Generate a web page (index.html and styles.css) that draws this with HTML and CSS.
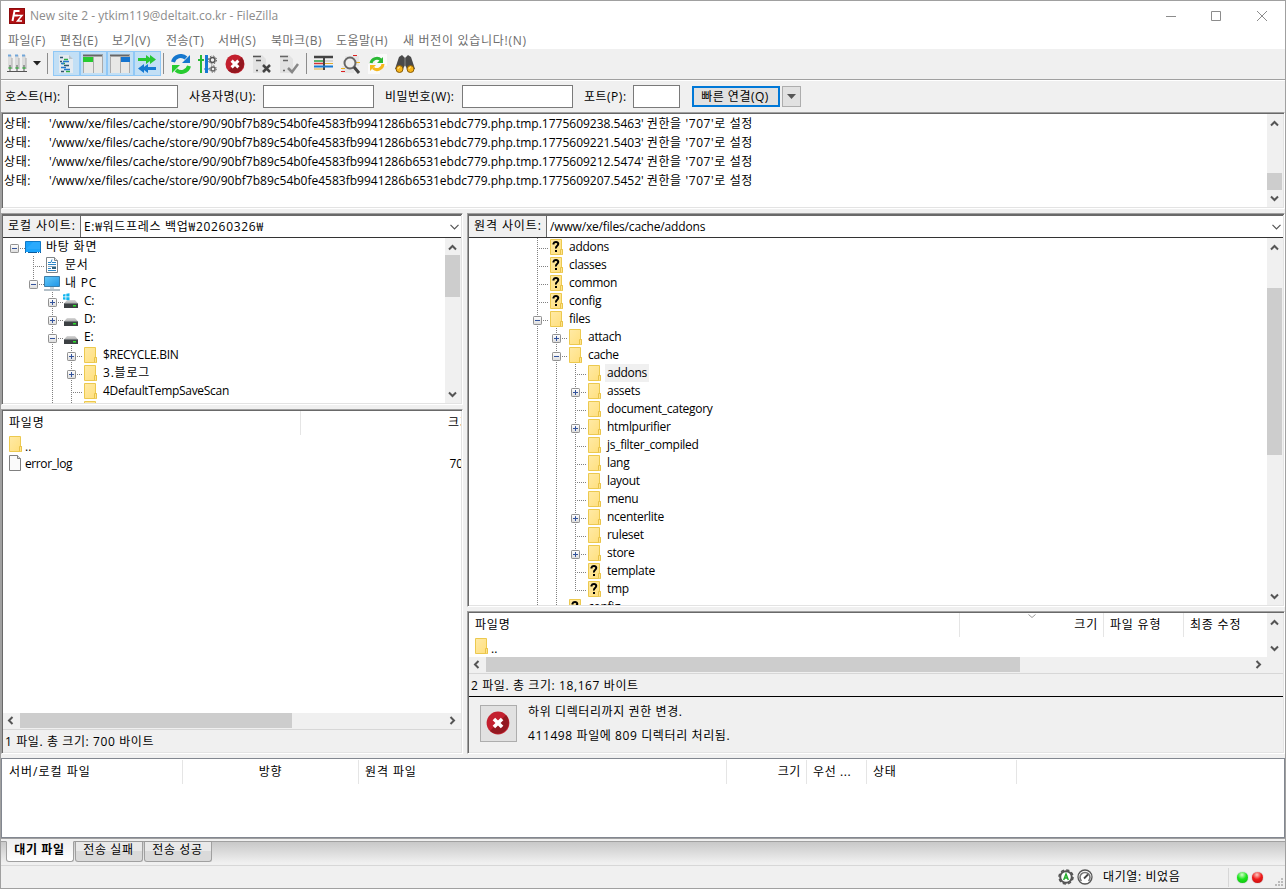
FILE: index.html
```
<!DOCTYPE html>
<html lang="ko">
<head>
<meta charset="utf-8">
<title>New site 2 - FileZilla</title>
<link rel="stylesheet" href="styles.css">
</head>
<body>
<svg class="defs" width="0" height="0">
  <defs>
    <linearGradient id="gf" x1="0" y1="0" x2="1" y2="1"><stop offset="0" stop-color="#ffeaa6"/><stop offset="1" stop-color="#ffdf7c"/></linearGradient>
    <linearGradient id="gb" x1="0" y1="0" x2="1" y2="1"><stop offset="0" stop-color="#65c8f7"/><stop offset="1" stop-color="#1e96e8"/></linearGradient>
    <linearGradient id="gd" x1="0" y1="0" x2="0" y2="1"><stop offset="0" stop-color="#d9d9d9"/><stop offset="1" stop-color="#b0b0b0"/></linearGradient>
    <linearGradient id="gx" x1="0" y1="0" x2="0" y2="1"><stop offset="0" stop-color="#fff"/><stop offset="1" stop-color="#dcdcdc"/></linearGradient>
    <symbol id="folder" viewBox="0 0 16 16"><path d="M2.5.5h11v10h1v5h-12z" fill="url(#gf)" stroke="#ecc94f"/><path d="M12.5 15v-4.500h2v5" fill="#ffe48c" stroke="#e8c34a"/></symbol>
    <symbol id="qfolder" viewBox="0 0 16 16"><use href="#folder"/><path d="M5.500 5.600V4.500Q6 3 8 3t2.300 1.800Q10.300 6 9 7T8 9.500" fill="none" stroke="#000" stroke-width="2"/><path d="M7 11h2v2H7z"/></symbol>
    <symbol id="plus" viewBox="0 0 9 9"><rect x=".5" y=".5" width="8" height="8" rx=".7" fill="url(#gx)" stroke="#919191"/><path d="M2 4.500h5M4.500 2v5" stroke="#33539c"/></symbol>
    <symbol id="minus" viewBox="0 0 9 9"><rect x=".5" y=".5" width="8" height="8" rx=".7" fill="url(#gx)" stroke="#919191"/><path d="M2 4.500h5" stroke="#33539c"/></symbol>
    <symbol id="desktop" viewBox="0 0 16 16"><path d="M.5 2.500h15v11H.5z" fill="#1aa3fb" stroke="#0f78c6"/><path d="M8 3h7v7H1z" fill="#39b1ff" opacity=".5"/><path d="M0 13.500h16" stroke="#0a5a9c"/><path d="M1 13.500h2M12 13.500h1M14 13.500h1" stroke="#fff"/></symbol>
    <symbol id="doc" viewBox="0 0 16 16"><path d="M2.500.5h8l3 3v12h-11z" fill="#fff" stroke="#7d8488"/><path d="M10.500.5v3h3" fill="#e6e6e6" stroke="#7d8488"/><path d="M4 5.500h3l1-3M8 5.500h4M4 7.500h8M4 11.500h3M4 13.500h8" stroke="#2b87c8" fill="none"/><path d="M4 9.500h8" stroke="#8ca8bc"/><path d="M8 10h4v2H8z" fill="#30627e"/></symbol>
    <symbol id="pc" viewBox="0 0 16 16"><path d="M.5 1.500h15v10H.5z" fill="url(#gb)" stroke="#3b7eaa"/><path d="M6 12h4v2H6z" fill="#c7d3dc"/><path d="M0 15h16" stroke="#9aaab5" stroke-width="1.500"/></symbol>
    <symbol id="drive" viewBox="0 0 16 16"><path d="M4 7h8l2.500 3h-13z" fill="url(#gd)"/><path d="M1 10h14v5H1z" fill="#3c4043"/><path d="M1 10.500h14" stroke="#74797c"/><path d="M10 12h3v1.500h-3z" fill="#2be22b"/></symbol>
    <symbol id="cdrive" viewBox="0 0 16 16"><use href="#drive"/><path d="M0 1.500 2.500 1v2.500H0zM3.300.8 6.500.3v3.200H3.300zM0 4.300h2.500v2.500L0 6.400zM3.300 4.300h3.200v3L3.300 6.900z" fill="#12b5ee"/></symbol>
    <symbol id="file" viewBox="0 0 16 16"><path d="M2.500.5h8l3 3v12h-11z" fill="#fafafa" stroke="#808080"/><path d="M10.500.5v3h3" fill="#ddd" stroke="#808080"/></symbol>
    <symbol id="up" viewBox="0 0 9 7"><path d="M1 5.500 4.500 2 8 5.500" fill="none" stroke="#555" stroke-width="2"/></symbol>
    <symbol id="down" viewBox="0 0 9 7"><path d="M1 1.500 4.500 5 8 1.500" fill="none" stroke="#555" stroke-width="2"/></symbol>
    <symbol id="left" viewBox="0 0 7 9"><path d="M5.500 1 2 4.500 5.500 8" fill="none" stroke="#555" stroke-width="2"/></symbol>
    <symbol id="right" viewBox="0 0 7 9"><path d="M1.500 1 5 4.500 1.500 8" fill="none" stroke="#555" stroke-width="2"/></symbol>
    <symbol id="combo" viewBox="0 0 9 6"><path d="M.5.8 4.500 4.800 8.500.8" fill="none" stroke="#555" stroke-width="1.200"/></symbol>
    <symbol id="stop" viewBox="0 0 20 20"><circle cx="10" cy="10" r="9.500" fill="#c3202f"/><path d="M16.700 3.300A9.500 9.500 0 0 1 3.300 16.700z" fill="#931820"/><path d="m6.600 6.600 6.800 6.800m0-6.800-6.800 6.800" stroke="#fff" stroke-width="3"/></symbol>
  </defs>
</svg>
<div class="window">
  <header class="titlebar">
    <svg class="logo" viewBox="0 0 16 16"><path d="M0 0h16v16H0z" fill="#b10f12"/><path d="M.5.5h15v15H.5z" fill="none" stroke="#8c0b0d"/><path d="M3.500 13 5.500 3h5M4.500 7.500h4" fill="none" stroke="#fff" stroke-width="2"/><path d="M8 7.500h5L8.500 13H13" fill="none" stroke="#fff" stroke-width="1.500"/></svg>
    <span class="caption">New site 2 - ytkim119@deltait.co.kr - FileZilla</span>
    <svg class="winbtns" width="104" height="12" viewBox="0 0 104 12"><path d="M1 6.500h10M46.500 1.500h9v9h-9zM92 1l10 10M102 1 92 11" fill="none" stroke="#8c8c8c"/></svg>
  </header>
  <nav class="menubar">
    <span class="m1">파일(F)</span><span class="m2">편집(E)</span><span class="m3">보기(V)</span><span class="m4">전송(T)</span><span class="m5">서버(S)</span><span class="m6">북마크(B)</span><span class="m7">도움말(H)</span><span class="m8">새 버전이 있습니다!(N)</span>
  </nav>
  <div class="toolbar">
    <svg class="ic sites" viewBox="0 0 20 20"><path d="M1 1h4v13H1zM8 1h4v13H8zM15 1h4v13h-4z" fill="#dcdcdc"/><path d="M1 1.500h3M8 1.500h3M15 1.500h3" stroke="#71a6d9" stroke-width="2"/><path d="M3 11v7M10 11v7M17 11v7M0 17.500h20" stroke="#555"/><path d="M5 4v11M12 4v11M19 4v11" stroke="#aaa"/><path d="M1.500 13h3v2h-3zM8.500 13h3v2h-3zM15.500 13h3v2h-3z" fill="#59ab5e"/></svg>
    <svg class="caret" width="8" height="5"><path d="M0 0h8L4 4.500z" fill="#222"/></svg>
    <i class="sep s1"></i>
    <div class="toggles">
      <span class="tg"><svg class="ic" viewBox="0 0 20 20"><path d="M3 1h10l4 4v14H3z" fill="#e4eaf0"/><path d="M13 1v4h4" fill="#b8c4ce"/><path d="M4 3.500h3M4 7.500h2M8 11.500h5M5 17.500h3" stroke="#30556f" stroke-width="1.500"/><path d="M8 5.500h4M6 9.500h3M10 17.500h4" stroke="#2cae41" stroke-width="1.500"/><path d="M5 9.500h3M7 7.500h6M5 13.500h5M8 15.500h6" stroke="#2578cc" stroke-width="1.500"/></svg></span>
      <span class="tg"><svg class="ic" viewBox="0 0 20 20"><path d="M0 1h20v18H0z" fill="#e8e8e6"/><path d="M0 1.500h20" stroke="#666" stroke-width="2"/><path d="M10.500 2v17M19.500 1v18M.5 8v11" stroke="#aaa"/><path d="M0 3h10v5H0z" fill="#27ca30"/></svg></span>
      <span class="tg"><svg class="ic" viewBox="0 0 20 20"><path d="M0 1h20v18H0z" fill="#e8e8e6"/><path d="M0 1.500h20" stroke="#666" stroke-width="2"/><path d="M10.500 2v17M19.500 1v18M.5 3v16" stroke="#aaa"/><path d="M11 3h9v5h-9z" fill="#1474cf"/></svg></span>
      <span class="tg"><svg class="ic" viewBox="0 0 20 20"><path d="M1 4h8V1l4 3V1l6 4.500-6 4.500V7L9 10V7H1z" fill="#27c733"/><path d="M19 13h-8v-3l-4 3v-3l-6 4.500L7 19v-3l4 3v-3h8z" fill="#1679d2"/></svg></span>
    </div>
    <i class="sep s2"></i>
    <svg class="ic t1" viewBox="0 0 20 20"><path d="M2 8a8 8 0 0 1 13-4" fill="none" stroke="#1677ce" stroke-width="4"/><path d="M19 1v8h-8z" fill="#1677ce"/><path d="M18 12a8 8 0 0 1-13 4" fill="none" stroke="#27cb30" stroke-width="4"/><path d="M1 19v-8h8z" fill="#27cb30"/></svg>
    <svg class="ic t2" viewBox="0 0 20 20"><path d="M3 1v18M0 6h6" stroke="#27b934" stroke-width="2"/><path d="M8.500 1v18" stroke="#1679d2" stroke-width="3"/><path d="M6 15h6" stroke="#1679d2"/><circle cx="14.500" cy="6" r="2.500" fill="none" stroke="#555" stroke-width="1.500"/><circle cx="14.500" cy="6" r="4" fill="none" stroke="#555" stroke-dasharray="1.600 1.540"/><circle cx="15" cy="15" r="2" fill="none" stroke="#666" stroke-width="1.500"/><circle cx="15" cy="15" r="3.300" fill="none" stroke="#666" stroke-dasharray="1.300 1.290"/></svg>
    <svg class="ic t3"><use href="#stop"/></svg>
    <svg class="ic t4" viewBox="0 0 20 20"><path d="M1 1h9l4 4v14H1z" fill="#e2e2e2"/><path d="M1 2.500h8M4 6.500h5M4 16.500h2" stroke="#555" stroke-width="1.500"/><path d="m11 11 7 7m0-7-7 7" stroke="#444" stroke-width="2.500"/></svg>
    <svg class="ic t5" viewBox="0 0 20 20"><path d="M1 1h9l4 4v14H1z" fill="#e2e2e2"/><path d="M1 2.500h8M4 6.500h5M4 16.500h2" stroke="#666" stroke-width="1.500"/><path d="m9 14 4 4 6-8" fill="none" stroke="#888" stroke-width="2.500"/></svg>
    <i class="sep s3"></i>
    <svg class="ic t6" viewBox="0 0 20 20"><path d="M0 2h19v15H0z" fill="#f0f0f0"/><path d="M0 3h19" stroke="#444" stroke-width="2.500"/><path d="M10 3v13" stroke="#444" stroke-width="2"/><path d="M0 7h9" stroke="#2a9e43" stroke-width="1.500"/><path d="M11 7h8" stroke="#bbb"/><path d="M0 9.500h9" stroke="#d43434" stroke-width="1.500"/><path d="M0 12.500h19" stroke="#1679d2" stroke-width="2"/><path d="M11 9.500h8M0 15h9" stroke="#e0ac31"/></svg>
    <svg class="ic t7" viewBox="0 0 20 20"><path d="M4 2h14v10H4zM1 12h12v7H1z" fill="#e5e5e5"/><path d="M12 1.500h4" stroke="#d22"/><path d="M15 8.500h4M0 14.500h4" stroke="#efb31c"/><path d="M0 17.500h4" stroke="#d22"/><circle cx="9" cy="9" r="5.500" fill="#eee" stroke="#666" stroke-width="2"/><path d="m13 13 5 6" stroke="#444" stroke-width="3"/></svg>
    <svg class="ic t8" viewBox="0 0 20 20"><path d="M7 0h12v12H7zM0 10h12v10H0z" fill="#fafafa"/><path d="M3 9a6 6 0 0 1 10-3" fill="none" stroke="#2ab935" stroke-width="3"/><path d="M15 3v6H9z" fill="#2ab935"/><path d="M15 10a6 6 0 0 1-10 4" fill="none" stroke="#f6b719" stroke-width="3"/><path d="M2 17v-6h6z" fill="#f6b719"/></svg>
    <svg class="ic t9" viewBox="0 0 20 20"><path d="m4 3 3-2 3 3 3-3 3 2 4 12h-8l-2-4-2 4H0z" fill="#494949"/><path d="M10 4v7" stroke="#888"/><circle cx="4.500" cy="15" r="3.500" fill="#f7b41a" stroke="#865c0a"/><circle cx="15.500" cy="15" r="3.500" fill="#f7b41a" stroke="#865c0a"/><path d="M3 15q0-2 2-2M14 15q0-2 2-2" fill="none" stroke="#ffe697"/></svg>
  </div>
  <div class="quick">
    <label class="q1">호스트(H):</label><i class="inp i1"></i>
    <label class="q2">사용자명(U):</label><i class="inp i2"></i>
    <label class="q3">비밀번호(W):</label><i class="inp i3"></i>
    <label class="q4">포트(P):</label><i class="inp i4"></i>
    <span class="connect">빠른 연결(Q)</span><span class="drop"><svg width="9" height="5"><path d="M0 0h9L4.500 5z" fill="#555"/></svg></span>
  </div>
  <section class="sunken log">
    <div class="loglines">
      <p><b class="ko">상태:</b><span>'/www/xe/files/cache/store/90/90bf7b89c54b0fe4583fb9941286b6531ebdc779.php.tmp.1775609238.5463' <em class="ko">권한을 '707'로 설정</em></span></p>
      <p><b class="ko">상태:</b><span>'/www/xe/files/cache/store/90/90bf7b89c54b0fe4583fb9941286b6531ebdc779.php.tmp.1775609221.5403' <em class="ko">권한을 '707'로 설정</em></span></p>
      <p><b class="ko">상태:</b><span>'/www/xe/files/cache/store/90/90bf7b89c54b0fe4583fb9941286b6531ebdc779.php.tmp.1775609212.5474' <em class="ko">권한을 '707'로 설정</em></span></p>
      <p><b class="ko">상태:</b><span>'/www/xe/files/cache/store/90/90bf7b89c54b0fe4583fb9941286b6531ebdc779.php.tmp.1775609207.5452' <em class="ko">권한을 '707'로 설정</em></span></p>
    </div>
    <div class="vbar"><svg class="arrow"><use href="#up"/></svg><i class="thumb logthumb"></i><svg class="arrow"><use href="#down"/></svg></div>
  </section>
  <main class="panes">
    <div class="col">
      <section class="sunken ltree">
        <div class="site"><span class="ko sitelabel">로컬 사이트:</span><span class="path ko">E:₩워드프레스 백업₩20260326₩</span><svg class="cb"><use href="#combo"/></svg></div>
        <div class="treewrap">
          <div class="tree lt">
            <div class="row"><i class="c h"><svg><use href="#minus"/></svg></i><svg class="n"><use href="#desktop"/></svg><span class="ko">바탕 화면</span></div>
            <div class="row"><i class="c"></i><i class="c v h"></i><svg class="n"><use href="#doc"/></svg><span class="ko">문서</span></div>
            <div class="row"><i class="c"></i><i class="c half h"><svg><use href="#minus"/></svg></i><svg class="n"><use href="#pc"/></svg><span class="ko">내 PC</span></div>
            <div class="row"><i class="c"></i><i class="c"></i><i class="c v h"><svg><use href="#plus"/></svg></i><svg class="n"><use href="#cdrive"/></svg><span>C:</span></div>
            <div class="row"><i class="c"></i><i class="c"></i><i class="c v h"><svg><use href="#plus"/></svg></i><svg class="n"><use href="#drive"/></svg><span>D:</span></div>
            <div class="row"><i class="c"></i><i class="c"></i><i class="c v h"><svg><use href="#minus"/></svg></i><svg class="n"><use href="#drive"/></svg><span>E:</span></div>
            <div class="row"><i class="c"></i><i class="c"></i><i class="c v"></i><i class="c v h"><svg><use href="#plus"/></svg></i><svg class="n"><use href="#folder"/></svg><span>$RECYCLE.BIN</span></div>
            <div class="row"><i class="c"></i><i class="c"></i><i class="c v"></i><i class="c v h"><svg><use href="#plus"/></svg></i><svg class="n"><use href="#folder"/></svg><span class="ko">3.블로그</span></div>
            <div class="row"><i class="c"></i><i class="c"></i><i class="c v"></i><i class="c v h"></i><svg class="n"><use href="#folder"/></svg><span>4DefaultTempSaveScan</span></div>
            <div class="row"><i class="c"></i><i class="c"></i><i class="c v"></i><i class="c v h"></i><svg class="n"><use href="#folder"/></svg></div>
          </div>
          <div class="vbar"><svg class="arrow"><use href="#up"/></svg><i class="thumb ltthumb"></i><svg class="arrow"><use href="#down"/></svg></div>
        </div>
      </section>
      <section class="sunken llist">
        <div class="lhead ko"><span class="lh1">파일명</span><span class="lh2">크기</span></div>
        <div class="frow"><svg class="n"><use href="#folder"/></svg><span class="dots">..</span></div>
        <div class="frow"><svg class="n"><use href="#file"/></svg><span class="fname">error_log</span><span class="size">700</span></div>
        <div class="fill"></div>
        <div class="hbar"><svg class="hh"><use href="#left"/></svg><i class="thumb lhthumb"></i><svg class="hh last"><use href="#right"/></svg></div>
        <div class="status ko">1 파일. 총 크기: 700 바이트</div>
      </section>
    </div>
    <div class="col">
      <section class="sunken rtree">
        <div class="site"><span class="ko sitelabel">원격 사이트:</span><span class="path rpath">/www/xe/files/cache/addons</span><svg class="cb"><use href="#combo"/></svg></div>
        <div class="treewrap">
          <div class="tree rt">
            <div class="row"><i class="c v h"></i><svg class="n"><use href="#qfolder"/></svg><span>addons</span></div>
            <div class="row"><i class="c v h"></i><svg class="n"><use href="#qfolder"/></svg><span>classes</span></div>
            <div class="row"><i class="c v h"></i><svg class="n"><use href="#qfolder"/></svg><span>common</span></div>
            <div class="row"><i class="c v h"></i><svg class="n"><use href="#qfolder"/></svg><span>config</span></div>
            <div class="row"><i class="c v h"><svg><use href="#minus"/></svg></i><svg class="n"><use href="#folder"/></svg><span>files</span></div>
            <div class="row"><i class="c v"></i><i class="c v h"><svg><use href="#plus"/></svg></i><svg class="n"><use href="#folder"/></svg><span>attach</span></div>
            <div class="row"><i class="c v"></i><i class="c v h"><svg><use href="#minus"/></svg></i><svg class="n"><use href="#folder"/></svg><span>cache</span></div>
            <div class="row"><i class="c v"></i><i class="c v"></i><i class="c v h"></i><svg class="n"><use href="#folder"/></svg><span class="sel">addons</span></div>
            <div class="row"><i class="c v"></i><i class="c v"></i><i class="c v h"><svg><use href="#plus"/></svg></i><svg class="n"><use href="#folder"/></svg><span>assets</span></div>
            <div class="row"><i class="c v"></i><i class="c v"></i><i class="c v h"></i><svg class="n"><use href="#folder"/></svg><span>document_category</span></div>
            <div class="row"><i class="c v"></i><i class="c v"></i><i class="c v h"><svg><use href="#plus"/></svg></i><svg class="n"><use href="#folder"/></svg><span>htmlpurifier</span></div>
            <div class="row"><i class="c v"></i><i class="c v"></i><i class="c v h"></i><svg class="n"><use href="#folder"/></svg><span>js_filter_compiled</span></div>
            <div class="row"><i class="c v"></i><i class="c v"></i><i class="c v h"></i><svg class="n"><use href="#folder"/></svg><span>lang</span></div>
            <div class="row"><i class="c v"></i><i class="c v"></i><i class="c v h"></i><svg class="n"><use href="#folder"/></svg><span>layout</span></div>
            <div class="row"><i class="c v"></i><i class="c v"></i><i class="c v h"></i><svg class="n"><use href="#folder"/></svg><span>menu</span></div>
            <div class="row"><i class="c v"></i><i class="c v"></i><i class="c v h"><svg><use href="#plus"/></svg></i><svg class="n"><use href="#folder"/></svg><span>ncenterlite</span></div>
            <div class="row"><i class="c v"></i><i class="c v"></i><i class="c v h"></i><svg class="n"><use href="#folder"/></svg><span>ruleset</span></div>
            <div class="row"><i class="c v"></i><i class="c v"></i><i class="c v h"><svg><use href="#plus"/></svg></i><svg class="n"><use href="#folder"/></svg><span>store</span></div>
            <div class="row"><i class="c v"></i><i class="c v"></i><i class="c v h"></i><svg class="n"><use href="#qfolder"/></svg><span>template</span></div>
            <div class="row"><i class="c v"></i><i class="c v"></i><i class="c half h"></i><svg class="n"><use href="#qfolder"/></svg><span>tmp</span></div>
            <div class="row"><i class="c v"></i><i class="c v h"></i><svg class="n"><use href="#qfolder"/></svg><span>config</span></div>
          </div>
          <div class="vbar"><svg class="arrow"><use href="#up"/></svg><i class="thumb rtthumb"></i><svg class="arrow"><use href="#down"/></svg></div>
        </div>
      </section>
      <section class="sunken rlist">
        <div class="rbody">
          <div class="rtable">
            <div class="rhead ko"><span class="r1">파일명</span><span class="r2">크기<svg class="sort" width="8" height="5"><path d="m.5.5 3.500 3 3.500-3" fill="none" stroke="#999"/></svg></span><span class="r3">파일 유형</span><span class="r4">최종 수정</span></div>
            <div class="frow"><svg class="n"><use href="#folder"/></svg><span class="dots">..</span></div>
          </div>
          <div class="vbar"><svg class="arrow"><use href="#up"/></svg><svg class="arrow"><use href="#down"/></svg></div>
        </div>
        <div class="hbar rh"><svg class="hh"><use href="#left"/></svg><i class="thumb rhthumb"></i><svg class="hh last"><use href="#right"/></svg></div>
        <div class="status ko">2 파일. 총 크기: 18,167 바이트</div>
        <div class="progress ko"><span class="stopbtn"><svg width="24" height="24"><use href="#stop"/></svg></span><div><p>하위 디렉터리까지 권한 변경.</p><p>411498 파일에 809 디렉터리 처리됨.</p></div></div>
      </section>
    </div>
  </main>
  <section class="queue ko"><span class="k1">서버/로컬 파일</span><span class="k2">방향</span><span class="k3">원격 파일</span><span class="k4">크기</span><span class="k5">우선 ...</span><span class="k6">상태</span></section>
  <div class="tabs ko"><span class="tab on">대기 파일</span><span class="tab">전송 실패</span><span class="tab">전송 성공</span></div>
  <footer class="foot ko">
    <svg width="16" height="16" viewBox="0 0 16 16"><circle cx="8" cy="8" r="5.800" fill="#fff" stroke="#555" stroke-width="2"/><circle cx="8" cy="8" r="7" fill="none" stroke="#555" stroke-width="1.600" stroke-dasharray="3.200 2.300"/><path d="m5.700 11 2.300-6 2.300 6M6.500 9h3" fill="none" stroke="#24ac2c" stroke-width="1.500"/></svg>
    <svg class="gauge" width="16" height="16" viewBox="0 0 16 16"><circle cx="8" cy="8" r="7" fill="#fff" stroke="#555" stroke-width="1.300"/><path d="M4.500 12a5 5 0 1 1 7 0" fill="none" stroke="#777" stroke-width="1.600"/><path d="m7 9.500 4-4" stroke="#444" stroke-width="1.800"/></svg>
    <span class="qtext">대기열: 비었음</span>
    <i class="fsep"></i><i class="led g"></i><i class="led r"></i>
    <svg class="grip" width="9" height="9"><path d="M6 0h2v2H6zM3 3h2v2H3zM6 3h2v2H6zM0 6h2v2H0zM3 6h2v2H3zM6 6h2v2H6z" fill="#bbb"/></svg>
  </footer>
</div>
</body>
</html>
```
FILE: styles.css
```
* { box-sizing: border-box; }
html, body { margin: 0; height: 889px; overflow: hidden; }
body { font: 12px/18px "Open Sans", "Noto Sans CJK KR", sans-serif; color: #000; background: #f0f0f0; }
p { margin: 0; }
b, em { font-weight: 400; font-style: normal; }
i { display: block; flex: none; }
svg { display: block; flex: none; }
.defs { position: absolute; }
.ko { letter-spacing: .6px; white-space: nowrap; }
.window { width: 1286px; height: 889px; border: 1px solid #a0a0a0; background: #f0f0f0; display: flex; flex-direction: column; overflow: hidden; }
.window > * { flex: none; }

.titlebar { height: 30px; background: #fff; display: flex; align-items: center; padding: 0 16px 0 8px; color: #8c8c8c; }
.logo { width: 16px; height: 16px; }
.caption { margin-left: 5px; flex: 1; letter-spacing: .01px; white-space: nowrap; }
.menubar { height: 18px; background: #fff; color: #6d6d6d; display: flex; padding-left: 7px; line-height: 20px; letter-spacing: .5px; white-space: nowrap; }
.m1, .m2, .m4 { width: 52px; }
.m3 { width: 54px; }
.m5 { width: 53px; }
.m6 { width: 65px; }
.m7 { width: 67px; }
.m8 { letter-spacing: .7px; }

.toolbar { height: 32px; display: flex; align-items: center; padding: 0 0 2px 6px; border-bottom: 1px solid #fff; box-shadow: inset 0 -1px #a0a0a0; }
.ic { width: 20px; height: 20px; }
.caret { margin-left: 6px; }
.sep { width: 1px; height: 21px; background: #8c8c8c; }
.s1 { margin-left: 6px; }
.toggles { display: flex; margin-left: 5px; }
.tg { width: 27px; height: 25px; background: #c2dff5; border: 1px solid #90c8f6; display: flex; align-items: center; padding-left: 2px; }
.s2 { margin-left: 2px; }
.t1, .t2, .t3, .t4, .t5, .t6, .t7, .t8, .t9 { margin-left: 7px; }
.s3 { margin-left: 7px; }

.quick { height: 31px; display: flex; align-items: center; padding-left: 4px; letter-spacing: .5px; white-space: nowrap; }
.inp { height: 23px; background: #fff; border: 1px solid #7a7a7a; }
.q1 { width: 63px; }
.q2 { width: 74px; margin-left: 11px; }
.q3 { width: 77px; margin-left: 11px; }
.q4 { width: 49px; margin-left: 11px; }
.i1 { width: 110px; }
.i2, .i3 { width: 111px; }
.i4 { width: 47px; }
.connect { width: 88px; height: 21px; margin-left: 12px; padding-right: 2px; background: #e1e1e1; border: 2px solid #0078d7; text-align: center; line-height: 18px; }
.drop { width: 19px; height: 21px; margin-left: 2px; background: #e1e1e1; border: 1px solid #adadad; display: flex; align-items: center; justify-content: center; }

.sunken { border: 1px solid; border-color: #a0a0a0 #fff #fff #a0a0a0; box-shadow: inset 1px 1px #696969, inset -1px -1px #e3e3e3; padding: 1px; background: #fff; overflow: hidden; }
.log { height: 97px; display: flex; }
.loglines { flex: 1; }
.loglines p { display: flex; height: 19px; line-height: 19px; padding-left: 1px; white-space: nowrap; }
.loglines b { width: 45px; }
.vbar { width: 16px; background: #f0f0f0; display: flex; flex-direction: column; align-items: center; flex: none; padding-right: 1px; }
.arrow { width: 9px; height: 7px; margin-top: 6px; }
.arrow:last-child { margin: auto 0 5px; }
.thumb { background: #cdcdcd; }
.logthumb { width: 15px; height: 17px; margin-top: 46px; }

.panes { height: 541px; margin-top: 4px; display: grid; grid-template-columns: 462px 818px; grid-template-rows: 541px; column-gap: 4px; }
.col { display: flex; flex-direction: column; gap: 4px; min-height: 0; }
.col > .sunken { display: flex; flex-direction: column; min-height: 0; }
.ltree { height: 192px; flex: none; }
.rtree { height: 394px; flex: none; }
.llist, .rlist { flex: 1; }
.site { height: 23px; display: flex; align-items: center; background: #fff; border-top: 1px solid #696969; border-bottom: 1px solid #333; flex: none; line-height: 20px; }
.sitelabel { width: 78px; height: 21px; padding-left: 5px; background: #f0f0f0; border-right: 1px solid #696969; letter-spacing: .9px; }
.path { flex: 1; padding-left: 3px; letter-spacing: .7px; }
.rpath { letter-spacing: -.16px; }
.cb { width: 9px; height: 6px; margin-right: 2px; }
.treewrap { display: flex; flex: 1; min-height: 0; overflow: hidden; }
.tree { flex: 1; overflow: hidden; letter-spacing: -.29px; }
.tree .ko { letter-spacing: .8px; }
.lt { padding-left: 2px; }
.rt { padding-left: 59px; }
.row { height: 18px; display: flex; line-height: 17px; white-space: nowrap; }
.c { width: 19px; height: 18px; position: relative; }
.c.v::before, .c.half::before { content: ""; position: absolute; left: 9px; top: 0; width: 1px; height: 18px; background: repeating-linear-gradient(#808080 0 1px, transparent 1px 2px); }
.c.half::before { height: 10px; }
.c.h::after { content: ""; position: absolute; left: 9px; top: 10px; width: 11px; height: 1px; background: repeating-linear-gradient(90deg, #808080 0 1px, transparent 1px 2px); }
.c svg { position: absolute; z-index: 1; left: 5px; top: 6px; width: 9px; height: 9px; }
.n { width: 16px; height: 16px; margin: 1px 5px 0 1px; }
.sel { background: #f0f0f0; margin-left: -2px; padding: 0 2px; }
.ltthumb { width: 15px; height: 42px; margin-top: 4px; }
.rtthumb { width: 15px; height: 167px; margin-top: 37px; }

.lhead { height: 24px; display: flex; flex: none; line-height: 23px; letter-spacing: .8px; overflow: hidden; }
.lh1 { width: 298px; flex: none; padding-left: 6px; border-right: 1px solid #e5e5e5; }
.lh2 { padding-left: 147px; flex: none; }
.frow { height: 19px; display: flex; flex: none; line-height: 19px; padding-left: 4px; overflow: hidden; }
.frow .n { margin: 1px 2px 0 0; }
.frow .dots { line-height: 23px; }
.fname { letter-spacing: -.4px; }
.size { margin-left: auto; margin-right: -9px; }
.fill { flex: 1; }
.hbar { height: 16px; background: #f0f0f0; display: flex; align-items: flex-start; flex: none; }
.hh { width: 7px; height: 9px; margin: 3px 6px 0 4px; }
.last { margin: 3px 5px 0 auto; }
.hbar .thumb { height: 15px; }
.lhthumb { width: 272px; }
.status { height: 23px; flex: none; background: #f0f0f0; border-top: 1px solid #d7d7d7; line-height: 23px; padding-left: 2px; }
.rbody { display: flex; height: 44px; flex: none; }
.rtable { flex: 1; }
.rhead { height: 24px; display: flex; line-height: 23px; letter-spacing: .8px; }
.rhead span { border-right: 1px solid #e5e5e5; }
.rhead .r1 { width: 491px; padding-left: 6px; }
.rhead .r2 { width: 144px; text-align: right; padding-right: 5px; position: relative; }
.sort { position: absolute; left: 68px; top: 1px; }
.rhead .r3 { width: 80px; padding-left: 6px; }
.rhead .r4 { padding-left: 6px; border: 0; }
.rh { padding-right: 16px; }
.rhthumb { width: 534px; }
.progress { flex: 1; min-height: 0; background: #f0f0f0; border-top: 1px solid #000; display: flex; padding: 8px 0 0 11px; }
.progress p { height: 24px; line-height: 14px; }
.progress p + p { height: 14px; }
.progress div { margin-left: 11px; }
.stopbtn { width: 37px; height: 37px; background: #e1e1e1; border: 1px solid #adadad; padding: 5px 0 0 5px; }

.queue { height: 80px; margin-top: 4px; background: #fff; border: 1px solid #828790; display: flex; padding-top: 1px; line-height: 23px; }
.queue span { height: 24px; border-right: 1px solid #e5e5e5; }
.k1 { width: 181px; padding-left: 7px; letter-spacing: 1px; }
.k2 { width: 176px; text-align: center; }
.k3 { width: 368px; padding-left: 6px; letter-spacing: .9px; }
.k4 { width: 80px; text-align: right; padding-right: 5px; }
.k5 { width: 60px; padding-left: 6px; }
.k6 { width: 150px; padding-left: 6px; }
.tabs { height: 28px; padding: 3px 0 0 5px; display: flex; gap: 1px; background: linear-gradient(#a0a0a0 0 1px, #f0f0f0 1px 3px, #a0a0a0 3px 4px, #c8c8c8 4px, #f0f0f0 25px); border-bottom: 1px solid #d7d7d7; }
.tab { height: 21px; width: 68px; padding-right: 1px; border: 1px solid #a0a0a0; border-top-color: #999; border-radius: 0 0 3px 3px; background: linear-gradient(#e9e9e9 45%, #dadada 50%); text-align: center; line-height: 16px; }
.tab.on { background: linear-gradient(#f0f0f0, #fff); font-weight: 700; border-top-color: #f0f0f0; }
.foot { flex: 1; display: flex; align-items: center; padding-left: 1057px; position: relative; }
.gauge { margin-left: 3px; }
.qtext { margin-left: 10px; width: 125px; }
.fsep { width: 1px; height: 19px; background: #d7d7d7; }
.led { width: 11px; height: 11px; border-radius: 50%; margin-left: 8px; }
.led + .led { margin-left: 4px; }
.g { background: radial-gradient(circle at 45% 25%, #d2ffc9, #1be51b 45%, #0db60d); box-shadow: 0 0 1px #486; }
.r { background: radial-gradient(circle at 45% 25%, #ffc9c2, #ef1a1a 45%, #b90d0d); box-shadow: 0 0 1px #844; }
.grip { position: absolute; right: 1px; bottom: 1px; }
```
